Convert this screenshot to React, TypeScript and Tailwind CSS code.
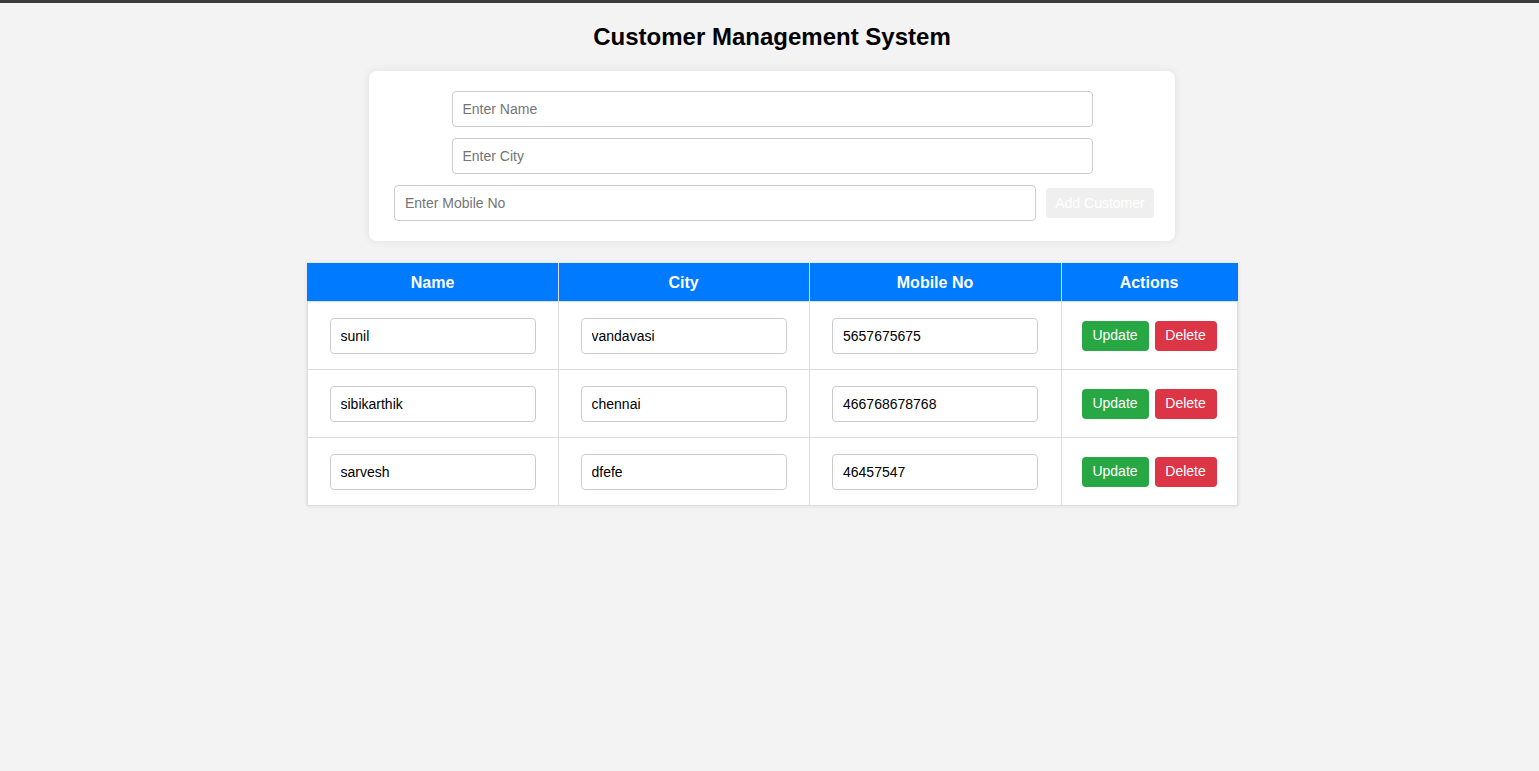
import React from "react";

const rows = [
  { name: "sunil", city: "vandavasi", mobile: "5657675675" },
  { name: "sibikarthik", city: "chennai", mobile: "466768678768" },
  { name: "sarvesh", city: "dfefe", mobile: "46457547" },
];

export default function App() {
  return (
    <div className="min-h-[771px] bg-[#f3f3f3] pl-[5px] font-['Liberation_Sans',Arial,sans-serif] text-black">
      <div className="-ml-[5px] h-[3px] bg-[#3b3b3b]" />
      <h1 className="pt-[20px] text-center text-[24px] font-bold leading-[28px]">Customer Management System</h1>
      <div className="mx-auto mt-[20px] flex w-[806px] flex-col items-center rounded-[8px] bg-white pt-[20px] pb-[20px] shadow-[0_0_10px_rgba(0,0,0,0.08)]">
        <input
          placeholder="Enter Name"
          className="h-[36px] w-[641px] rounded-[4px] border border-[#ccc] px-[10px] text-[14px] placeholder:text-[#757575] outline-none"
        />
        <input
          placeholder="Enter City"
          className="mt-[11px] h-[36px] w-[641px] rounded-[4px] border border-[#ccc] px-[10px] text-[14px] placeholder:text-[#757575] outline-none"
        />
        <div className="mt-[11px] flex w-full items-center pl-[25px] pr-[21px]">
          <input
            placeholder="Enter Mobile No"
            className="h-[36px] w-[642px] rounded-[4px] border border-[#ccc] px-[10px] text-[14px] placeholder:text-[#757575] outline-none"
          />
          <button className="ml-[10px] h-[30px] w-[108px] rounded-[4px] bg-[#efefef] text-[14px] font-normal text-white">
            Add Customer
          </button>
        </div>
      </div>
      <div className="mx-auto mt-[22px] w-[931px] bg-white shadow-[0_0_4px_rgba(0,0,0,0.1)]">
        <table className="w-full border-collapse">
          <thead>
            <tr className="h-[38px] bg-[#007bff] text-[16px] font-bold text-white">
              <th className="w-[251px] border border-[#ddd] border-t-[#007bff] border-l-[#007bff]">Name</th>
              <th className="w-[251px] border border-[#ddd] border-t-[#007bff]">City</th>
              <th className="w-[252px] border border-[#ddd] border-t-[#007bff]">Mobile No</th>
              <th className="border border-[#ddd] border-t-[#007bff] border-r-[#007bff]">Actions</th>
            </tr>
          </thead>
          <tbody>
            {rows.map((r) => (
              <tr key={r.name} className="h-[68px]">
                {[r.name, r.city, r.mobile].map((v, i) => (
                  <td key={i} className="border border-[#ddd] text-center">
                    <input
                      defaultValue={v}
                      className="h-[36px] w-[206px] rounded-[4px] border border-[#ccc] px-[10px] text-[14px] text-black outline-none"
                    />
                  </td>
                ))}
                <td className="border border-[#ddd] text-center">
                  <div className="flex items-center justify-center gap-[6px]">
                    <button className="h-[30px] w-[67px] rounded-[4px] bg-[#28a745] text-[14px] text-white">Update</button>
                    <button className="h-[30px] w-[62px] rounded-[4px] bg-[#dc3545] text-[14px] text-white">Delete</button>
                  </div>
                </td>
              </tr>
            ))}
          </tbody>
        </table>
      </div>
    </div>
  );
}
